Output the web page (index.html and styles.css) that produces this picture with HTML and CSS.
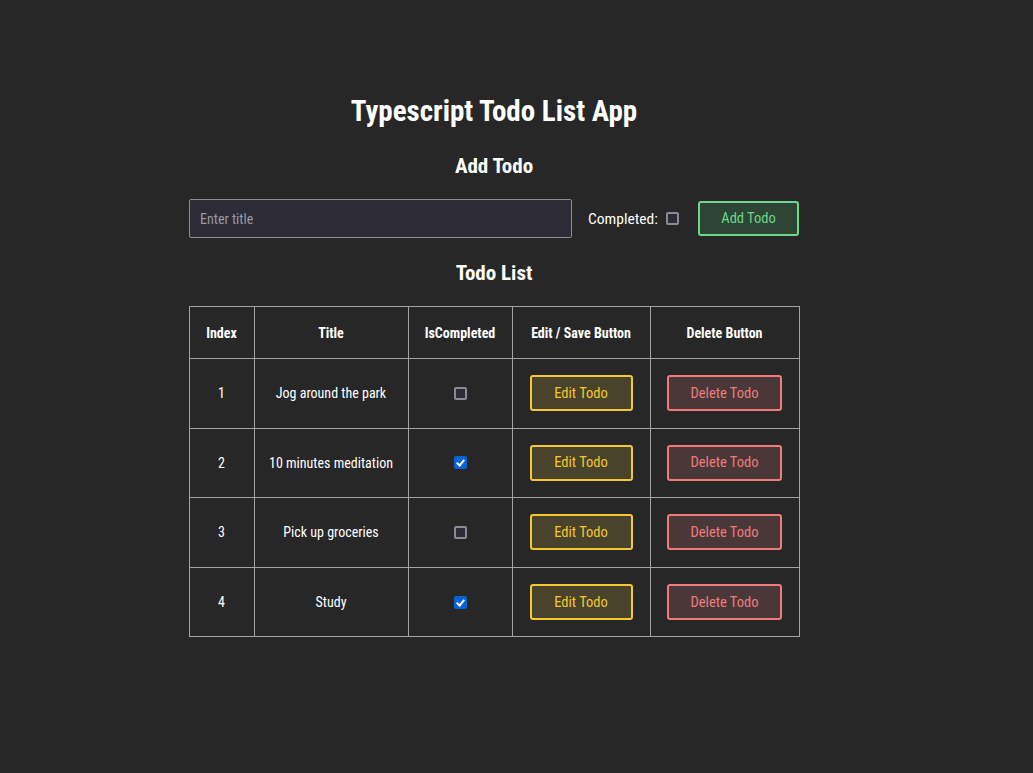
FILE: index.html
```html
<!DOCTYPE html>
<html lang="en">
<head>
<meta charset="utf-8">
<title>Typescript Todo List App</title>
<link rel="stylesheet" href="styles.css">
</head>
<body>
<main class="app">
  <h1 class="title">Typescript Todo List App</h1>
  <h2 class="subtitle">Add Todo</h2>
  <form class="add-form">
    <input class="title-input" type="text" placeholder="Enter title">
    <label class="completed-label">Completed: <input class="check" type="checkbox"></label>
    <button class="btn btn-add" type="button">Add Todo</button>
  </form>
  <h2 class="subtitle list-title">Todo List</h2>
  <table class="todo-table">
    <colgroup>
      <col class="c1"><col class="c2"><col class="c3"><col class="c4"><col class="c5">
    </colgroup>
    <thead>
      <tr><th>Index</th><th>Title</th><th>IsCompleted</th><th>Edit / Save Button</th><th>Delete Button</th></tr>
    </thead>
    <tbody>
      <tr><td>1</td><td>Jog around the park</td><td><input class="check" type="checkbox"></td><td><button class="btn btn-edit" type="button">Edit Todo</button></td><td><button class="btn btn-delete" type="button">Delete Todo</button></td></tr>
      <tr><td>2</td><td>10 minutes meditation</td><td><input class="check" type="checkbox" checked></td><td><button class="btn btn-edit" type="button">Edit Todo</button></td><td><button class="btn btn-delete" type="button">Delete Todo</button></td></tr>
      <tr><td>3</td><td>Pick up groceries</td><td><input class="check" type="checkbox"></td><td><button class="btn btn-edit" type="button">Edit Todo</button></td><td><button class="btn btn-delete" type="button">Delete Todo</button></td></tr>
      <tr><td>4</td><td>Study</td><td><input class="check" type="checkbox" checked></td><td><button class="btn btn-edit" type="button">Edit Todo</button></td><td><button class="btn btn-delete" type="button">Delete Todo</button></td></tr>
    </tbody>
  </table>
</main>
</body>
</html>
```

FILE: styles.css
```css
html, body {
  margin: 0;
  background: #272727;
  color: #ffffff;
  font-family: "Roboto Condensed", "Roboto", sans-serif;
}
body {
  padding: 0 45px 0 0;
  min-height: 773px;
  box-sizing: border-box;
}
.app {
  width: 610px;
  margin: 0 auto;
  padding-top: 92px;
  display: flex;
  flex-direction: column;
  align-items: center;
}
.title {
  margin: 0;
  font-size: 29px;
  line-height: 38px;
  font-weight: 700;
}
.subtitle {
  margin: 22px 0 0;
  font-size: 21px;
  line-height: 28px;
  font-weight: 700;
}
.add-form {
  margin-top: 19px;
  width: 100%;
  display: flex;
  align-items: center;
}
.title-input {
  width: 383px;
  height: 39px;
  box-sizing: border-box;
  background: #2c2b36;
  border: 1px solid #8d8d93;
  border-radius: 2px;
  color: #fff;
  padding: 0 10px;
  font: inherit;
  font-size: 14px;
  outline: none;
}
.title-input::placeholder { color: #9a9aa2; }
.completed-label {
  margin-left: 16px;
  font-size: 15.5px;
  display: flex;
  align-items: center;
  gap: 8px;
}
.check {
  appearance: none;
  -webkit-appearance: none;
  width: 13px;
  height: 13px;
  margin: 0;
  box-sizing: border-box;
  border: 2px solid #8c8b95;
  border-radius: 2px;
  background: #2c2b36;
  position: relative;
  flex: none;
}
.check:checked {
  background: #0b62d6;
  border-color: #0b62d6;
}
.check:checked::after {
  content: "";
  position: absolute;
  left: 2.5px;
  top: 0px;
  width: 3px;
  height: 6px;
  border: solid #fff;
  border-width: 0 2px 2px 0;
  transform: rotate(40deg);
}
.btn {
  font: inherit;
  font-size: 14.5px;
  border-width: 2px;
  border-style: solid;
  border-radius: 3px;
  height: 36px;
  box-sizing: border-box;
  cursor: pointer;
}
.btn-add {
  margin-left: auto;
  width: 101px;
  height: 35px;
  background: #2e4434;
  border-color: #6bd88a;
  color: #6bd88a;
}
.list-title { margin-top: 21px; }
.todo-table {
  margin-top: 19px;
  width: 610px;
  border-collapse: collapse;
  table-layout: fixed;
  font-size: 14px;
}
.c1 { width: 65px; }
.c2 { width: 154px; }
.c3 { width: 104px; }
.c4 { width: 138px; }
.c5 { width: 149px; }
.todo-table th, .todo-table td {
  border: 1px solid #a3a3a3;
  text-align: center;
  vertical-align: middle;
  padding: 0;
}
.todo-table th {
  height: 51px;
  font-size: 14px;
  font-weight: 700;
}
.todo-table td { height: 68.6px; }
.todo-table td .check { display: block; margin: 0 auto; }
.btn-edit {
  width: 103px;
  background: #49432c;
  border-color: #f5c830;
  color: #f5c830;
}
.btn-delete {
  width: 115px;
  background: #4a3839;
  border-color: #f07b7b;
  color: #f07b7b;
}
```
